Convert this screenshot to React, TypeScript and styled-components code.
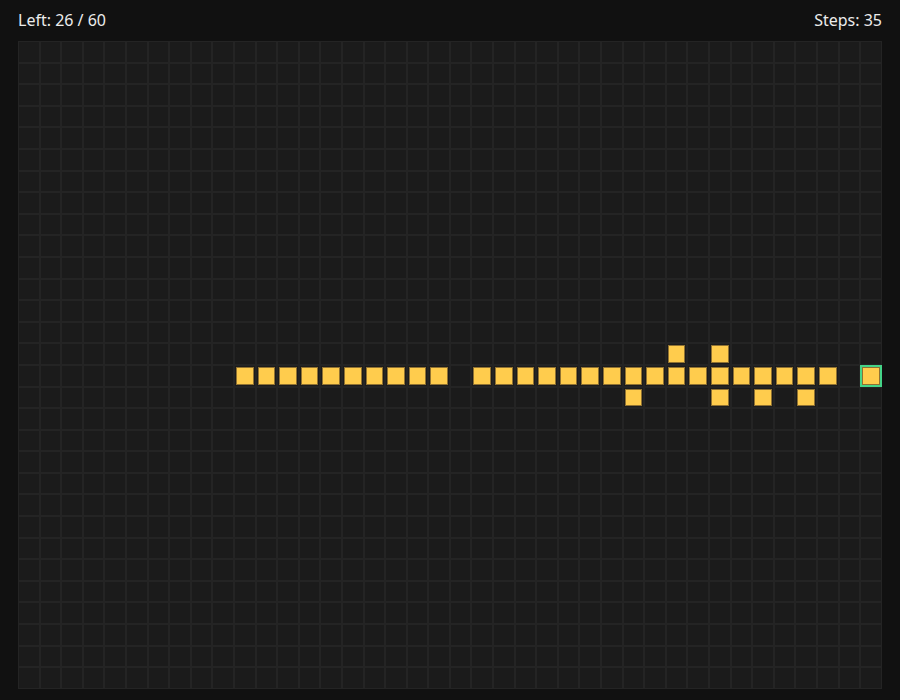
import React from "react";
import styled, { createGlobalStyle } from "styled-components";

const COLS = 40;
const ROWS = 30;
const CELL = 21.6;

const GlobalStyle = createGlobalStyle`
  html, body {
    margin: 0;
    padding: 0;
    background: #111111;
  }
  * {
    box-sizing: border-box;
  }
`;

const Page = styled.div`
  width: 900px;
  height: 700px;
  padding: 0 18px;
  background: #111111;
  font-family: "Noto Sans", "Open Sans", sans-serif;
`;

const Header = styled.div`
  display: flex;
  justify-content: space-between;
  align-items: center;
  height: 41px;
  padding-bottom: 1px;
  color: #ececec;
  font-size: 16px;
`;

const Board = styled.div`
  display: grid;
  grid-template-columns: repeat(${COLS}, ${CELL}px);
  grid-template-rows: repeat(${ROWS}, ${CELL}px);
  width: ${COLS * CELL}px;
  height: ${ROWS * CELL}px;
  background: #1b1b1b;
`;

const Cell = styled.div<{ $active: boolean }>`
  border: ${(p) => (p.$active ? "2px solid #45d488" : "1px solid #242424")};
  padding: ${(p) => (p.$active ? "0" : "1px")};
  background: #1b1b1b;
`;

const Piece = styled.div`
  width: 100%;
  height: 100%;
  background: #ffcc4d;
  border: 1px solid #8f7132;
`;

// the row of tiles plus the few that stick out above and below it
const tiles = new Set<string>();
for (let c = 10; c <= 19; c++) tiles.add(`15,${c}`);
for (let c = 21; c <= 37; c++) tiles.add(`15,${c}`);
[30, 32].forEach((c) => tiles.add(`14,${c}`));
[28, 32, 34, 36].forEach((c) => tiles.add(`16,${c}`));

const active = { row: 15, col: 39 };

const App: React.FC = () => {
  const cells = [];
  for (let r = 0; r < ROWS; r++) {
    for (let c = 0; c < COLS; c++) {
      const isActive = r === active.row && c === active.col;
      const filled = isActive || tiles.has(`${r},${c}`);
      cells.push(
        <Cell key={`${r}-${c}`} $active={isActive}>
          {filled && <Piece />}
        </Cell>
      );
    }
  }

  return (
    <>
      <GlobalStyle />
      <Page>
        <Header>
          <span>Left: 26 / 60</span>
          <span>Steps: 35</span>
        </Header>
        <Board>{cells}</Board>
      </Page>
    </>
  );
};

export default App;
